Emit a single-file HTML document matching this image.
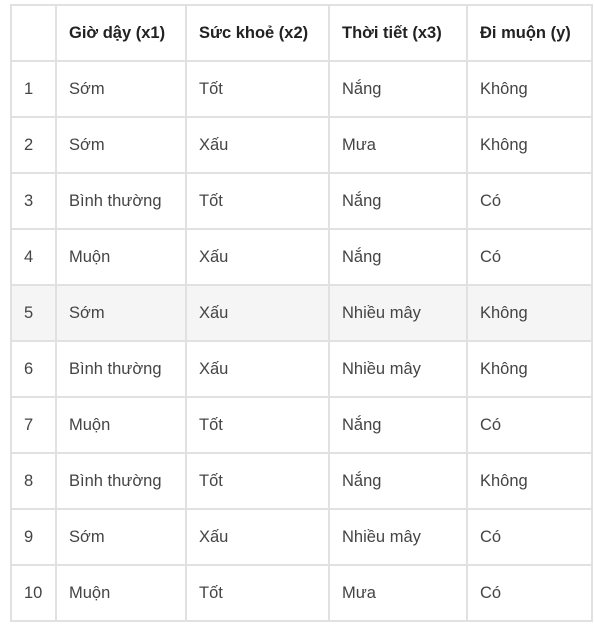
<!DOCTYPE html>
<html><head><meta charset="utf-8"><style>
body{margin:0;background:#fff;font-family:"Liberation Sans",sans-serif;}
table{position:absolute;left:10px;top:4px;border-collapse:collapse;table-layout:fixed;}
td,th{border:2px solid #e1e1e1;height:54px;padding:0 0 0 12px;text-align:left;font-size:16.5px;color:#444;white-space:nowrap;}
th{color:#222;font-weight:bold;}
tr.g td{background:#f5f5f5;}
</style></head><body>
<table>
<colgroup><col style="width:45px"><col style="width:130px"><col style="width:143px"><col style="width:138px"><col style="width:125px"></colgroup>
<tr><th></th><th>Giờ dậy (x1)</th><th>Sức khoẻ (x2)</th><th>Thời tiết (x3)</th><th>Đi muộn (y)</th></tr>
<tr><td>1</td><td>Sớm</td><td>Tốt</td><td>Nắng</td><td>Không</td></tr>
<tr><td>2</td><td>Sớm</td><td>Xấu</td><td>Mưa</td><td>Không</td></tr>
<tr><td>3</td><td>Bình thường</td><td>Tốt</td><td>Nắng</td><td>Có</td></tr>
<tr><td>4</td><td>Muộn</td><td>Xấu</td><td>Nắng</td><td>Có</td></tr>
<tr class="g"><td>5</td><td>Sớm</td><td>Xấu</td><td>Nhiều mây</td><td>Không</td></tr>
<tr><td>6</td><td>Bình thường</td><td>Xấu</td><td>Nhiều mây</td><td>Không</td></tr>
<tr><td>7</td><td>Muộn</td><td>Tốt</td><td>Nắng</td><td>Có</td></tr>
<tr><td>8</td><td>Bình thường</td><td>Tốt</td><td>Nắng</td><td>Không</td></tr>
<tr><td>9</td><td>Sớm</td><td>Xấu</td><td>Nhiều mây</td><td>Có</td></tr>
<tr><td>10</td><td>Muộn</td><td>Tốt</td><td>Mưa</td><td>Có</td></tr>
</table>
</body></html>
